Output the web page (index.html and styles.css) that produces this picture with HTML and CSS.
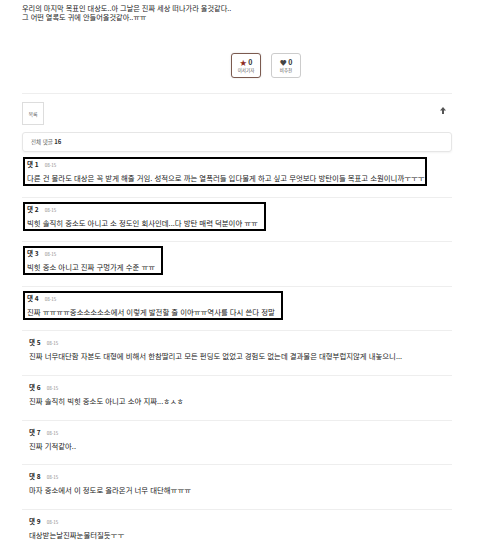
FILE: index.html
```html
<!DOCTYPE html>
<html lang="ko">
<head>
    <meta charset="UTF-8">
    <title>댓글</title>
    <link rel="stylesheet" href="styles.css">
</head>
<body>
    <div class="page">
        <!-- 본문 끝부분 -->
        <div class="article-text">
            <p>우리의 마지막 목표인 대상도..아 그날은 진짜 세상 떠나가라 울것같다..</p>
            <p>그 어떤 열록도 귀에 안들어올것같아..ㅠㅠ</p>
        </div>

        <!-- 추천 버튼 -->
        <div class="vote">
            <button class="vote-btn star-btn">
                <span class="vote-count"><span class="star">★</span> 0</span>
                <span class="vote-label">이서기자</span>
            </button>
            <button class="vote-btn heart-btn">
                <span class="vote-count"><span class="heart">♥</span> 0</span>
                <span class="vote-label">비추천</span>
            </button>
        </div>

        <div class="list-bar">
            <button class="list-btn">목록</button>
            <svg class="top-arrow" width="6" height="7" viewBox="0 0 6 7">
                <path d="M3 0 L6 3.5 L4 3.5 L4 7 L2 7 L2 3.5 L0 3.5 Z" fill="#555"/>
            </svg>
        </div>

        <div class="count-box">전체 댓글 <b>16</b></div>

        <!-- 댓글 목록 -->
        <div class="comments">
            <div class="comment">
                <div class="comment-body marked first">
                    <div class="meta"><b>댓 1</b><span class="date">08-15</span></div>
                    <div class="text">다른 건 몰라도 대상은 꼭 받게 해줄 거임. 성적으로 까는 열폭러들 입다물게 하고 싶고 무엇보다 방탄이들 목표고 소원이니까ㅜㅜㅜ</div>
                </div>
            </div>
            <div class="comment">
                <div class="comment-body marked">
                    <div class="meta"><b>댓 2</b><span class="date">08-15</span></div>
                    <div class="text">빅힛 솔직히 중소도 아니고 소 정도인 회사인데...다 방탄 매력 덕분이야 ㅠㅠ</div>
                </div>
            </div>
            <div class="comment">
                <div class="comment-body marked">
                    <div class="meta"><b>댓 3</b><span class="date">08-15</span></div>
                    <div class="text">빅힛 중소 아니고 진짜 구멍가게 수준 ㅠㅠ</div>
                </div>
            </div>
            <div class="comment">
                <div class="comment-body marked">
                    <div class="meta"><b>댓 4</b><span class="date">08-15</span></div>
                    <div class="text">진짜 ㅠㅠㅠㅠ중소소소소소에서 이렇게 발전할 줄 이야ㅠㅠ역사를 다시 쓴다 정말</div>
                </div>
            </div>
            <div class="comment">
                <div class="comment-body">
                    <div class="meta"><b>댓 5</b><span class="date">08-15</span></div>
                    <div class="text">진짜 너무대단함 자본도 대형에 비해서 한참딸리고 모든 펀딩도 없었고 경험도 없는데 결과물은 대형부럽지않게 내놓으니...</div>
                </div>
            </div>
            <div class="comment">
                <div class="comment-body">
                    <div class="meta"><b>댓 6</b><span class="date">08-15</span></div>
                    <div class="text">진짜 솔직히 빅힛 중소도 아니고 소야 지짜...ㅎㅅㅎ</div>
                </div>
            </div>
            <div class="comment">
                <div class="comment-body">
                    <div class="meta"><b>댓 7</b><span class="date">08-15</span></div>
                    <div class="text">진짜 기적같아..</div>
                </div>
            </div>
            <div class="comment">
                <div class="comment-body">
                    <div class="meta"><b>댓 8</b><span class="date">08-15</span></div>
                    <div class="text">마자 중소에서 이 정도로 올라온거 너무 대단해ㅠㅠㅠ</div>
                </div>
            </div>
            <div class="comment">
                <div class="comment-body">
                    <div class="meta"><b>댓 9</b><span class="date">08-15</span></div>
                    <div class="text">대상받는날진짜눈물터질듯ㅜㅜ</div>
                </div>
            </div>
        </div>
    </div>
</body>
</html>
```

FILE: styles.css
```css
/* 기본 */
body {
    margin: 0;
    font-family: "Noto Sans CJK KR", "Noto Sans", sans-serif;
    background: #ffffff;
    color: #222;
}

.page {
    width: 430px;
    margin-left: 22px;
}

/* 본문 */
.article-text {
    padding-top: 3.5px;
    font-size: 7.2px;
    line-height: 9px;
    color: #222;
}

.article-text p {
    margin: 0;
}

/* 추천 버튼 */
.vote {
    display: flex;
    gap: 10px;
    padding-left: 209px;
    margin-top: 31.5px;
}

.vote-btn {
    width: 30px;
    height: 25px;
    padding: 0;
    background: #fff;
    border: 1px solid #ccc;
    border-radius: 3px;
    display: flex;
    flex-direction: column;
    align-items: center;
    justify-content: center;
    font-family: inherit;
    cursor: pointer;
}

.star-btn {
    border-color: #7b5a4f;
    box-shadow: 0 0 2px rgba(0,0,0,0.15);
}

.vote-count {
    font-size: 7px;
    line-height: 9px;
    font-weight: bold;
    color: #333;
}

.star {
    color: #8e2a1d;
}

.heart {
    color: #444;
}

.vote-label {
    font-size: 4.5px;
    line-height: 7px;
    color: #555;
}

/* 목록 */
.list-bar {
    margin-top: 15px;
    border-top: 1px solid #eee;
    padding-top: 8px;
    display: flex;
    justify-content: space-between;
    align-items: flex-start;
}

.list-btn {
    width: 22px;
    height: 23px;
    padding: 0;
    background: #fff;
    border: 1px solid #ddd;
    font-family: inherit;
    font-size: 5px;
    color: #666;
}

.top-arrow {
    margin-top: 5px;
    margin-right: 6px;
}

/* 댓글 수 */
.count-box {
    margin-top: 7px;
    height: 20px;
    box-sizing: border-box;
    border: 1px solid #e6e6e6;
    border-radius: 3px;
    box-shadow: 0 1px 2px rgba(0,0,0,0.05);
    padding-left: 8px;
    font-size: 5.5px;
    line-height: 18px;
    color: #666;
}

.count-box b {
    color: #333;
    font-size: 6px;
}

/* 댓글 */
.comment {
    height: 44.6px;
    box-sizing: border-box;
    border-top: 1px solid #eee;
    padding-top: 4px;
    padding-left: 1px;
}

.comment:first-child {
    border-top: none;
    padding-top: 5px;
}

.comment-body {
    display: inline-block;
    border: 2px solid transparent;
    padding: 0 6px 1px 4px;
}

.comment-body.marked {
    border-color: #000;
    padding-left: 2px;
}

.comment-body.first {
    padding-right: 0;
}

.meta {
    font-size: 6.5px;
    line-height: 10px;
    color: #222;
}

.date {
    margin-left: 6px;
    font-size: 4.5px;
    color: #888;
}

.text {
    margin-top: 3px;
    font-size: 7.4px;
    line-height: 10px;
    color: #222;
    white-space: nowrap;
}
```
